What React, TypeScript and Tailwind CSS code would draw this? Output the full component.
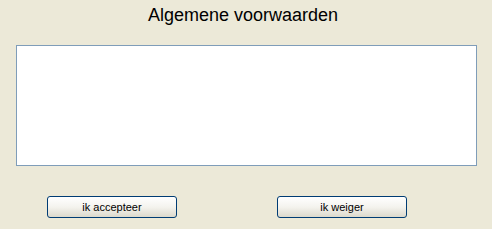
export default function App() {
  return (
    <div className="w-[492px] h-[229px] bg-[#ECE9D8] font-['Liberation_Sans',Arial,sans-serif] overflow-hidden">
      {/* Title */}
      <h1 className="pt-[5px] h-[45px] text-center text-[18px] leading-[21px] text-black">
        <span className="inline-block -translate-x-[3px]">Algemene voorwaarden</span>
      </h1>

      {/* Terms box */}
      <div className="ml-[16px] w-[461px] h-[121px] border border-[#7F9DB9] bg-white" />

      {/* Buttons */}
      <div className="flex mt-[30px] pl-[47px] gap-[100px]">
        <button className="w-[130px] h-[22px] rounded-[3px] border border-[#003C74] bg-gradient-to-b from-white via-[#F4F3EE] to-[#DCD9CC] text-[11px] leading-none text-black">
          ik accepteer
        </button>
        <button className="w-[130px] h-[22px] rounded-[3px] border border-[#003C74] bg-gradient-to-b from-white via-[#F4F3EE] to-[#DCD9CC] text-[11px] leading-none text-black">
          ik weiger
        </button>
      </div>
    </div>
  );
}
